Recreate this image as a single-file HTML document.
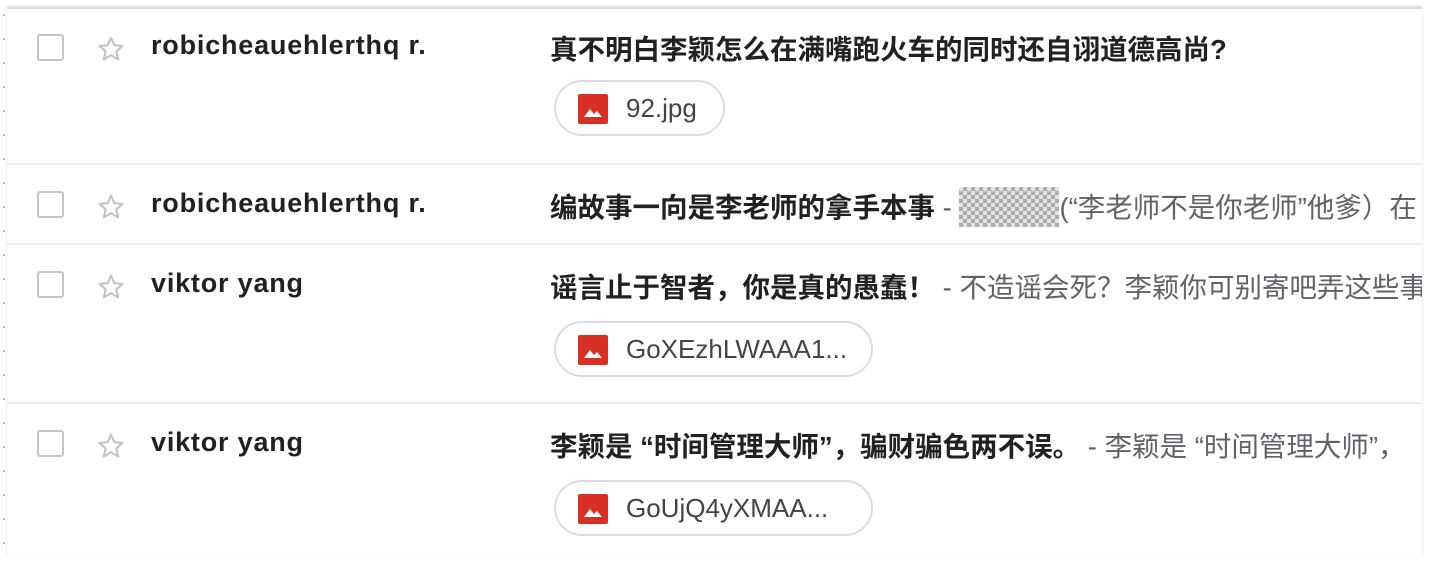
<!DOCTYPE html>
<html><head><meta charset="utf-8"><style>
body{margin:0;width:1438px;height:564px;background:#fff;overflow:hidden;font-family:"Liberation Sans","Noto Sans CJK SC",sans-serif;position:relative}
.dots{position:absolute;left:0;top:0;width:1438px;height:564px;background-image:radial-gradient(circle,#bbb 1px,transparent 1.3px);background-size:24px 24px;background-position:-8px 3px}
.panel{position:absolute;left:7px;top:7px;width:1415px;height:549px;background:#fff;overflow:hidden;border-top:2px solid #ddd;box-shadow:0 -1px 2px rgba(0,0,0,.15)}
.row{position:absolute;left:0;width:1415px;border-bottom:2px solid #eceff1}
.cb{position:absolute;left:30px;width:23px;height:23px;border:2.5px solid #c4c4c4;border-radius:3px}
.star{position:absolute;left:88px;width:32px;height:32px}
.snd{position:absolute;left:144px;font-size:27px;letter-spacing:0.8px;font-weight:bold;color:#202124;white-space:nowrap}
.sub{position:absolute;left:543px;font-size:27.5px;white-space:nowrap;color:#5f6368}
.sub b{color:#202124}
.chip{position:absolute;left:547px;height:56px;border:2px solid #dadce0;border-radius:30px;box-sizing:border-box;font-size:26px;color:#444;line-height:52px;padding-left:70px}
.ic{position:absolute;left:22px;top:12px;width:30px;height:30px}
.blur{display:inline-block;width:100px;height:40px;vertical-align:-10px;background:repeating-conic-gradient(#999 0 25%,#ddd 0 50%) 0 0/8px 8px;opacity:.8}
</style></head><body>
<div class="dots"></div>
<div class="panel">
<svg width="0" height="0" style="position:absolute"><defs><symbol id="s" viewBox="0 0 24 24"><path d="M12 3.5l2.5 5.6 6.1.6-4.6 4.1 1.4 6-5.4-3.2-5.4 3.2 1.4-6-4.6-4.1 6.1-.6z" fill="none" stroke="#c4c4c4" stroke-width="1.6" stroke-linejoin="round"/></symbol><symbol id="m" viewBox="0 0 30 30"><rect width="30" height="30" rx="2" fill="#d93025"/><path d="M6 23l6-8 4 5 3-3 5 6z" fill="#fff"/></symbol></defs></svg>

<div class="row" style="top:0;height:154px">
<div class="cb" style="top:25px"></div><svg class="star" style="top:24px"><use href="#s"/></svg>
<div class="snd" style="top:21px">robicheauehlerthq r.</div>
<div class="sub" style="top:18px"><b>真不明白李颖怎么在满嘴跑火车的同时还自诩道德高尚?</b></div>
<div class="chip" style="top:71px;width:171px"><svg class="ic"><use href="#m"/></svg>92.jpg</div>
</div>

<div class="row" style="top:156px;height:78px">
<div class="cb" style="top:26px"></div><svg class="star" style="top:26px"><use href="#s"/></svg>
<div class="snd" style="top:23px">robicheauehlerthq r.</div>
<div class="sub" style="top:20px"><b>编故事一向是李老师的拿手本事</b> - <span class="blur"></span>(“李老师不是你老师”他爹）在</div>
</div>

<div class="row" style="top:236px;height:157px">
<div class="cb" style="top:26px"></div><svg class="star" style="top:26px"><use href="#s"/></svg>
<div class="snd" style="top:23px">viktor yang</div>
<div class="sub" style="top:20px"><b>谣言止于智者，你是真的愚蠢！</b> - 不造谣会死？李颖你可别寄吧弄这些事</div>
<div class="chip" style="top:76px;width:319px"><svg class="ic"><use href="#m"/></svg>GoXEzhLWAAA1...</div>
</div>

<div class="row" style="top:395px;height:160px;border:0">
<div class="cb" style="top:26px"></div><svg class="star" style="top:26px"><use href="#s"/></svg>
<div class="snd" style="top:23px">viktor yang</div>
<div class="sub" style="top:20px"><b>李颖是 “时间管理大师”，骗财骗色两不误。</b> - 李颖是 “时间管理大师”，</div>
<div class="chip" style="top:76px;width:319px"><svg class="ic"><use href="#m"/></svg>GoUjQ4yXMAA...</div>
</div>
</div>
</body></html>
